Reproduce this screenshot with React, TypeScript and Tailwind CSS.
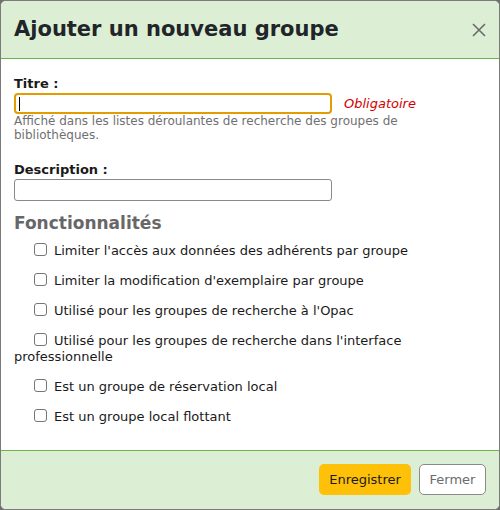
import React from "react";

const items: string[] = [
  "Limiter l'accès aux données des adhérents par groupe",
  "Limiter la modification d'exemplaire par groupe",
  "Utilisé pour les groupes de recherche à l'Opac",
  "Utilisé pour les groupes de recherche dans l'interface professionnelle",
  "Est un groupe de réservation local",
  "Est un groupe local flottant",
];

export default function App() {
  return (
    <div className="w-[500px] h-[510px] bg-[#6e6e6e]" style={{ fontFamily: '"DejaVu Sans", sans-serif' }}>
      <div className="w-[500px] h-[510px] border border-[#7a7a7a] rounded-[6px] overflow-hidden flex flex-col bg-white">
        <div className="h-[58px] shrink-0 bg-[#dcefd4] border-b border-[#6fb14a] flex items-center justify-between pl-[13px] pr-[12px]">
          <h1 className="text-[21px] font-bold text-[#212529] leading-none">Ajouter un nouveau groupe</h1>
          <svg width="16" height="16" viewBox="0 0 16 16" className="text-[#6b6b6b]">
            <path d="M2 2 L14 14 M14 2 L2 14" stroke="currentColor" strokeWidth="1.6" />
          </svg>
        </div>
        <div className="flex-1 pl-[13px] pr-[14px] pt-[16px] text-[#1a1a1a]">
          <label className="block h-[18px] leading-[18px] text-[13px] font-bold">Titre :</label>
          <div className="flex items-center h-[21px]">
            <div className="w-[318px] h-[21px] border-2 border-[#e59c00] rounded-[4px] bg-white flex items-center pl-[3px]">
              <span className="w-px h-[14px] bg-black" />
            </div>
            <span className="ml-[12px] text-[13px] italic text-[#d40000]">Obligatoire</span>
          </div>
          <p className="text-[12px] leading-[14px] text-[#707070]">
            Affiché dans les listes déroulantes de recherche des groupes de bibliothèques.
          </p>
          <label className="block mt-[19px] h-[18px] leading-[18px] text-[13px] font-bold">Description :</label>
          <div className="w-[318px] h-[22px] border border-[#8a8a8a] rounded-[3px] bg-white" />
          <h2 className="mt-[10px] h-[24px] leading-[24px] text-[17px] font-bold text-[#676767]">Fonctionnalités</h2>
          <div className="mt-[8px] flex flex-col gap-[14px] text-[13px] leading-[16px] text-[#1a1a1a]">
            {items.map((t) => (
              <label key={t} className="block">
                <input
                  type="checkbox"
                  className="appearance-none w-[13px] h-[13px] border border-[#767676] rounded-[3px] bg-white align-[-1px] ml-[20px] mr-[7px]"
                />
                {t}
              </label>
            ))}
          </div>
        </div>
        <div className="h-[59px] shrink-0 bg-[#dcefd4] border-t border-[#6fb14a] flex justify-end items-start pt-[13px] pr-[13px] gap-[8px]">
          <button className="w-[92px] h-[31px] rounded-[5px] bg-[#ffc107] text-[13px] text-[#1a1a1a]">Enregistrer</button>
          <button className="w-[67px] h-[31px] rounded-[5px] bg-white border border-[#8a8a8a] text-[13px] text-[#6b6b6b]">Fermer</button>
        </div>
      </div>
    </div>
  );
}
